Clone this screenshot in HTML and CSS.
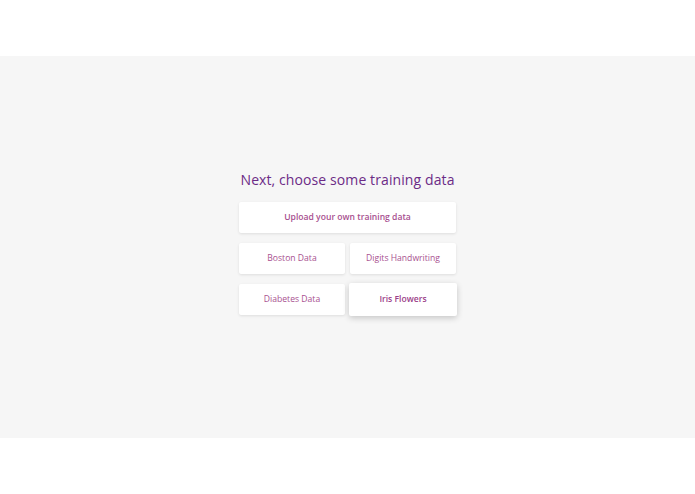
FILE: index.html
```html
<!DOCTYPE html>
<html lang="en">

<head>
    <meta charset="UTF-8">
    <meta name="viewport" content="width=device-width, initial-scale=1.0">
    <title>Choose training data</title>
    <link rel="stylesheet" href="styles.css">
</head>

<body>
    <div class="top-bar"></div>

    <div class="centered">
        <div class="chooser">
            <h2 class="chooser-title">Next, choose some training data</h2>
            <div class="grid-container">
                <button class="data-button wide strong">Upload your own training data</button>
                <button class="data-button">Boston Data</button>
                <button class="data-button">Digits Handwriting</button>
                <button class="data-button">Diabetes Data</button>
                <button class="data-button active">Iris Flowers</button>
            </div>
        </div>
    </div>

    <div class="bottom-bar"></div>
</body>

</html>
```

FILE: styles.css
```css
body {
    margin: 0;
    font-family: "Open Sans", "Liberation Sans", sans-serif;
    background-color: #ffffff;
}

.top-bar {
    height: 56px;
}

.centered {
    display: flex;
    justify-content: center;
    align-items: center;
    height: 382px;
    background-color: #f6f6f6;
    box-sizing: border-box;
    padding-bottom: 10px;
}

.chooser {
    display: flex;
    flex-direction: column;
    align-items: center;
}

.chooser-title {
    margin: 0 0 13px 0;
    font-size: 14px;
    font-weight: 400;
    color: #6c2b86;
    letter-spacing: 0.1px;
}

.grid-container {
    width: 217px;
    display: grid;
    grid-template-columns: repeat(2, 1fr);
    grid-auto-rows: 31px;
    column-gap: 5px;
    row-gap: 10px;
}

.data-button {
    padding: 0;
    border: none;
    border-radius: 2px;
    background-color: #ffffff;
    color: #a8508f;
    font-family: inherit;
    font-size: 8.6px;
    cursor: pointer;
    box-shadow: 0 1px 3px rgba(0, 0, 0, 0.1);
}

.data-button:hover {
    box-shadow: 0 2px 6px rgba(0, 0, 0, 0.18);
}

.wide {
    grid-column: 1 / 3;
}

.strong {
    font-weight: 600;
}

.active {
    font-weight: 600;
    color: #9c4189;
    margin: -1px;
    box-shadow: 0 2px 6px rgba(0, 0, 0, 0.2);
}
```
